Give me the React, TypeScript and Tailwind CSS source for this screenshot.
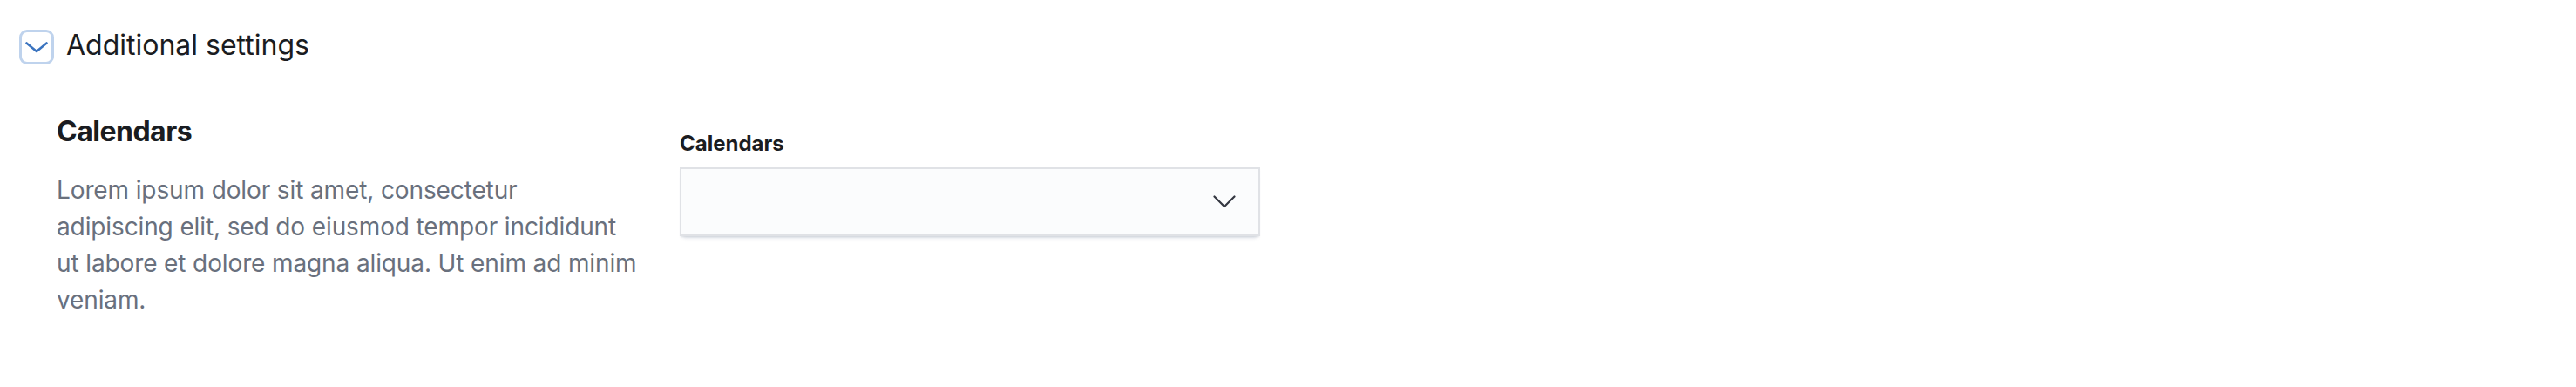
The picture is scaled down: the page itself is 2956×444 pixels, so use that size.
import React from "react";

export default function App() {
  return (
    <div className="w-[2956px] h-[444px] bg-white font-['Inter',sans-serif] overflow-hidden">
      <div className="flex items-center pl-[22px] pt-[32px]">
        <button className="w-[40px] h-[40px] flex items-center justify-center rounded-[9px] border-[3px] border-[#bfd3ed] bg-white">
          <svg width="26" height="13" viewBox="0 0 26 13" fill="none">
            <polyline points="1.5,1.5 13,11 24.5,1.5" stroke="#3a73bf" strokeWidth="2.6" strokeLinecap="round" strokeLinejoin="round" />
          </svg>
        </button>
        <span className="ml-[14px] mb-[4px] text-[32px] leading-[40px] text-[#1a1c21]">Additional settings</span>
      </div>

      <div className="flex gap-[48px] pl-[65px] mt-[51px]">
        <div className="w-[667px]">
          <h3 className="text-[32px] leading-[48px] font-bold tracking-[-0.5px] text-[#1a1c21]">Calendars</h3>
          <p className="mt-[22px] text-[28px] leading-[42px] tracking-[-0.12px] text-[#69707d] whitespace-nowrap">
            Lorem ipsum dolor sit amet, consectetur
            <br />
            adipiscing elit, sed do eiusmod tempor incididunt
            <br />
            ut labore et dolore magna aliqua. Ut enim ad minim
            <br />
            veniam.
          </p>
        </div>
        <div className="w-[666px] pt-[20px]">
          <label className="block text-[24px] leading-[36px] font-bold text-[#1a1c21]">Calendars</label>
          <div className="mt-[9px] h-[79px] flex items-center justify-end pr-[26px] bg-[#fbfcfd] border-2 border-[#e0e2e6] shadow-[0_2px_2px_-1px_rgba(152,162,179,0.3),0_6px_4px_-4px_rgba(152,162,179,0.3)]">
            <svg width="26" height="15" viewBox="0 0 26 15" fill="none">
              <polyline points="1.5,1.5 13,13 24.5,1.5" stroke="#343741" strokeWidth="2.2" strokeLinecap="round" strokeLinejoin="round" />
            </svg>
          </div>
        </div>
      </div>
    </div>
  );
}
